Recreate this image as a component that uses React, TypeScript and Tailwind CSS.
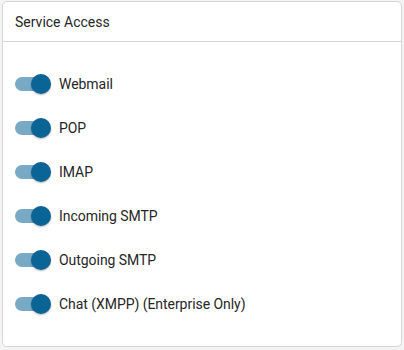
import React from "react";

const items = [
  "Webmail",
  "POP",
  "IMAP",
  "Incoming SMTP",
  "Outgoing SMTP",
  "Chat (XMPP) (Enterprise Only)",
];

function Toggle() {
  return (
    <div className="relative w-[36px] h-[20px] flex items-center shrink-0">
      <div className="w-[30px] h-[14px] rounded-full bg-[#78aac6]" />
      <div className="absolute right-0 top-0 w-[20px] h-[20px] rounded-full bg-[#0b6496] shadow-[0_1px_2px_rgba(0,0,0,0.3)]" />
    </div>
  );
}

export default function App() {
  return (
    <div
      className="w-[404px] h-[350px] bg-[#f4f4f4] pt-[1px] pl-[2px]"
      style={{ fontFamily: "Roboto, 'Liberation Sans', sans-serif" }}
    >
      <div className="w-[400px] h-[346px] bg-white border border-[#d6d6d6] rounded-[5px] flex flex-col">
        <div className="h-[40px] border-b border-[#d6d6d6] flex items-center pl-[12px] pt-[1px] text-[14px] text-[#262626]">
          Service Access
        </div>
        <div className="flex flex-col pt-[20px]">
          {items.map((t) => (
            <div key={t} className="h-[44px] flex items-center pl-[12px] gap-[8px]">
              <Toggle />
              <span className="text-[14px] text-[#262626] tracking-[-0.05px]">{t}</span>
            </div>
          ))}
        </div>
      </div>
    </div>
  );
}
